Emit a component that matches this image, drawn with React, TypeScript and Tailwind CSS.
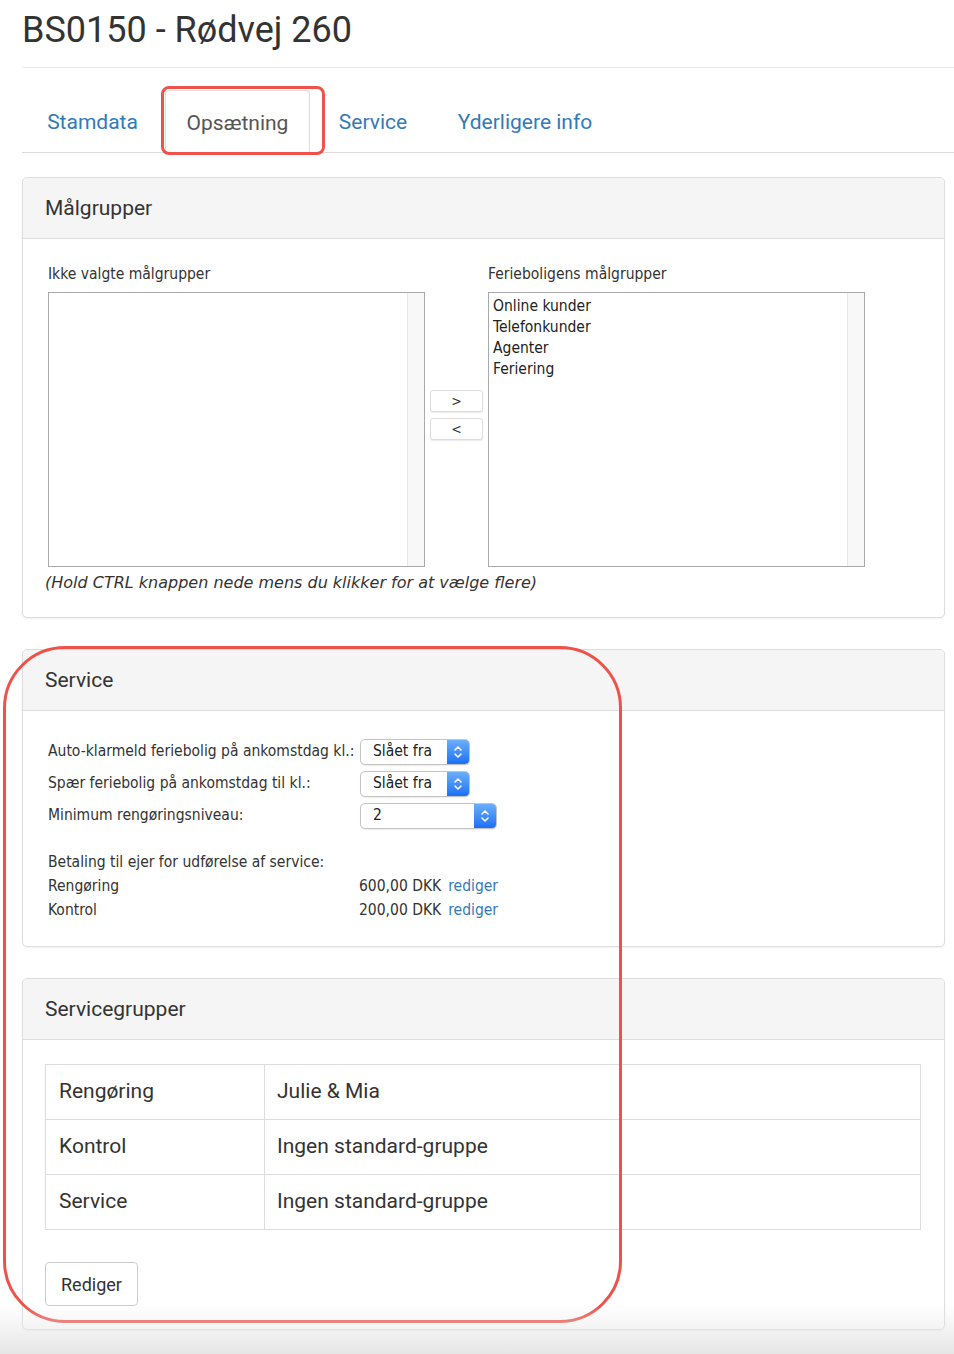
import React from "react";

const sans = "font-['Roboto','Liberation_Sans',sans-serif]";
const small = "font-['DejaVu_Sans_Condensed','DejaVu_Sans',sans-serif]";

function Panel({ title, children, className = "" }: { title: string; children: React.ReactNode; className?: string }) {
    return (
        <div className={`mr-[9px] rounded-[5px] border border-[#dddddd] bg-white shadow-[0_1px_2px_rgba(0,0,0,0.06)] ${className}`}>
            <div className="flex h-[61px] items-center rounded-t-[5px] border-b border-[#dddddd] bg-[#f5f5f5] px-[22px] pt-[1px]">
                <h2 className={`${sans} text-[21px] text-[#333]`}>{title}</h2>
            </div>
            {children}
        </div>
    );
}

function MacSelect({ value, width }: { value: string; width: number }) {
    return (
        <div
            className="flex h-[26px] items-stretch overflow-hidden rounded-[5px] border border-[#c4c4c4] bg-white shadow-[0_1px_1px_rgba(0,0,0,0.08)]"
            style={{ width }}
        >
            <span className={`${small} flex flex-1 items-center pl-[12px] text-[15.5px] text-[#222]`}>{value}</span>
            <span className="flex w-[22px] items-center justify-center bg-gradient-to-b from-[#6aaefc] to-[#1b6ff5]">
                <svg width="10" height="14" viewBox="0 0 10 14" fill="none" stroke="white" strokeWidth="1.6" strokeLinecap="round" strokeLinejoin="round">
                    <path d="M2 5 L5 2 L8 5" />
                    <path d="M2 9 L5 12 L8 9" />
                </svg>
            </span>
        </div>
    );
}

function ListBox({ items }: { items: string[] }) {
    return (
        <div className="relative h-[275px] w-[377px] border border-[#a9a9a9] bg-white">
            <div className="pt-[3px] pl-[4px]">
                {items.map((it) => (
                    <div key={it} className={`${small} text-[15.5px] leading-[21px] text-[#222]`}>
                        {it}
                    </div>
                ))}
            </div>
            <div className="absolute top-0 right-0 bottom-0 w-[17px] border-l border-[#e6e6e6] bg-[#f8f8f8]" />
        </div>
    );
}

export default function App() {
    const tabs = [
        { label: "Stamdata", w: 141 },
        { label: "Opsætning", w: 145, active: true },
        { label: "Service", w: 122 },
        { label: "Yderligere info", w: 182 },
    ];

    return (
        <div className="relative min-h-[1354px] overflow-hidden bg-white pl-[22px]">
            <h1 className={`${sans} pt-[9px] text-[36px] leading-[42px] text-[#333]`}>BS0150 - Rødvej 260</h1>
            <div className="mt-[16px] h-px bg-[#e8e8e8]" />

            <div className="mt-[22px] flex h-[63px] border-b border-[#dddddd]">
                {tabs.map((t) => (
                    <div
                        key={t.label}
                        className={`${sans} flex items-center justify-center pt-[4px] text-[21px] ${
                            t.active
                                ? "mb-[-1px] ml-[2px] mr-[2px] rounded-t-[4px] border border-b-0 border-[#dddddd] bg-white text-[#555]"
                                : "text-[#337ab7]"
                        }`}
                        style={{ width: t.w }}
                    >
                        {t.label}
                    </div>
                ))}
            </div>

            <Panel title="Målgrupper" className="mt-[24px]">
                <div className="pt-[24px] pb-[24px] pl-[25px]">
                    <div className="flex">
                        <div>
                            <div className={`${small} text-[15.5px] leading-[22px] text-[#333]`}>Ikke valgte målgrupper</div>
                            <div className="mt-[7px]">
                                <ListBox items={[]} />
                            </div>
                        </div>
                        <div className="mx-[5px] flex w-[53px] flex-col gap-[6px] pt-[127px]">
                            <button className={`${small} h-[22px] rounded-[3px] border border-[#dcdcdc] bg-white text-[14px] text-[#333] shadow-[0_1px_1px_rgba(0,0,0,0.08)]`}>&gt;</button>
                            <button className={`${small} h-[22px] rounded-[3px] border border-[#dcdcdc] bg-white text-[14px] text-[#333] shadow-[0_1px_1px_rgba(0,0,0,0.08)]`}>&lt;</button>
                        </div>
                        <div>
                            <div className={`${small} text-[15.5px] leading-[22px] text-[#333]`}>Ferieboligens målgrupper</div>
                            <div className="mt-[7px]">
                                <ListBox items={["Online kunder", "Telefonkunder", "Agenter", "Feriering"]} />
                            </div>
                        </div>
                    </div>
                    <p className="mt-[6px] ml-[-3px] font-['DejaVu_Sans',sans-serif] text-[16px] leading-[20px] text-[#333] italic">
                        (Hold CTRL knappen nede mens du klikker for at vælge flere)
                    </p>
                </div>
            </Panel>

            <Panel title="Service" className="mt-[31px]">
                <div className={`${small} pt-[28px] pb-[24px] pl-[25px] text-[15.5px] text-[#333]`}>
                    <div className="flex flex-col gap-[6px]">
                        {[
                            { label: "Auto-klarmeld feriebolig på ankomstdag kl.:", value: "Slået fra", w: 110 },
                            { label: "Spær feriebolig på ankomstdag til kl.:", value: "Slået fra", w: 110 },
                            { label: "Minimum rengøringsniveau:", value: "2", w: 137 },
                        ].map((r) => (
                            <div key={r.label} className="flex h-[26px] items-center">
                                <span className="w-[312px]">{r.label}</span>
                                <MacSelect value={r.value} width={r.w} />
                            </div>
                        ))}
                    </div>
                    <div className="mt-[21px] leading-[24px]">
                        <div>Betaling til ejer for udførelse af service:</div>
                        {[
                            { label: "Rengøring", amount: "600,00 DKK" },
                            { label: "Kontrol", amount: "200,00 DKK" },
                        ].map((r) => (
                            <div key={r.label} className="flex">
                                <span className="w-[311px]">{r.label}</span>
                                <span>{r.amount}</span>
                                <a className="ml-[7px] text-[#337ab7]">rediger</a>
                            </div>
                        ))}
                    </div>
                </div>
            </Panel>

            <Panel title="Servicegrupper" className="mt-[31px]">
                <div className="pt-[24px] pr-[23px] pb-[23px] pl-[22px]">
                    <table className={`${sans} w-full border-collapse text-[21px] text-[#333]`}>
                        <tbody>
                            {[
                                ["Rengøring", "Julie & Mia"],
                                ["Kontrol", "Ingen standard-gruppe"],
                                ["Service", "Ingen standard-gruppe"],
                            ].map(([a, b]) => (
                                <tr key={a} className="h-[55px]">
                                    <td className="w-[219px] border border-[#dddddd] pl-[13px]">{a}</td>
                                    <td className="border border-[#dddddd] pl-[12px]">{b}</td>
                                </tr>
                            ))}
                        </tbody>
                    </table>
                    <button className={`${sans} mt-[32px] h-[44px] w-[93px] rounded-[4px] border border-[#cccccc] bg-white text-[18px] text-[#333]`}>
                        Rediger
                    </button>
                </div>
            </Panel>

            {/* highlight marks from the screenshot */}
            <div className="pointer-events-none absolute top-[86px] left-[161px] h-[69px] w-[164px] rounded-[8px] border-[3px] border-[#ee5249]" />
            <div className="pointer-events-none absolute top-[646px] left-[3px] h-[677px] w-[619px] rounded-[62px] border-[3px] border-[#ee5249]" />
            <div className="pointer-events-none absolute right-0 bottom-0 left-0 h-[48px] bg-gradient-to-b from-transparent to-[#e6e6e6]" />
        </div>
    );
}
